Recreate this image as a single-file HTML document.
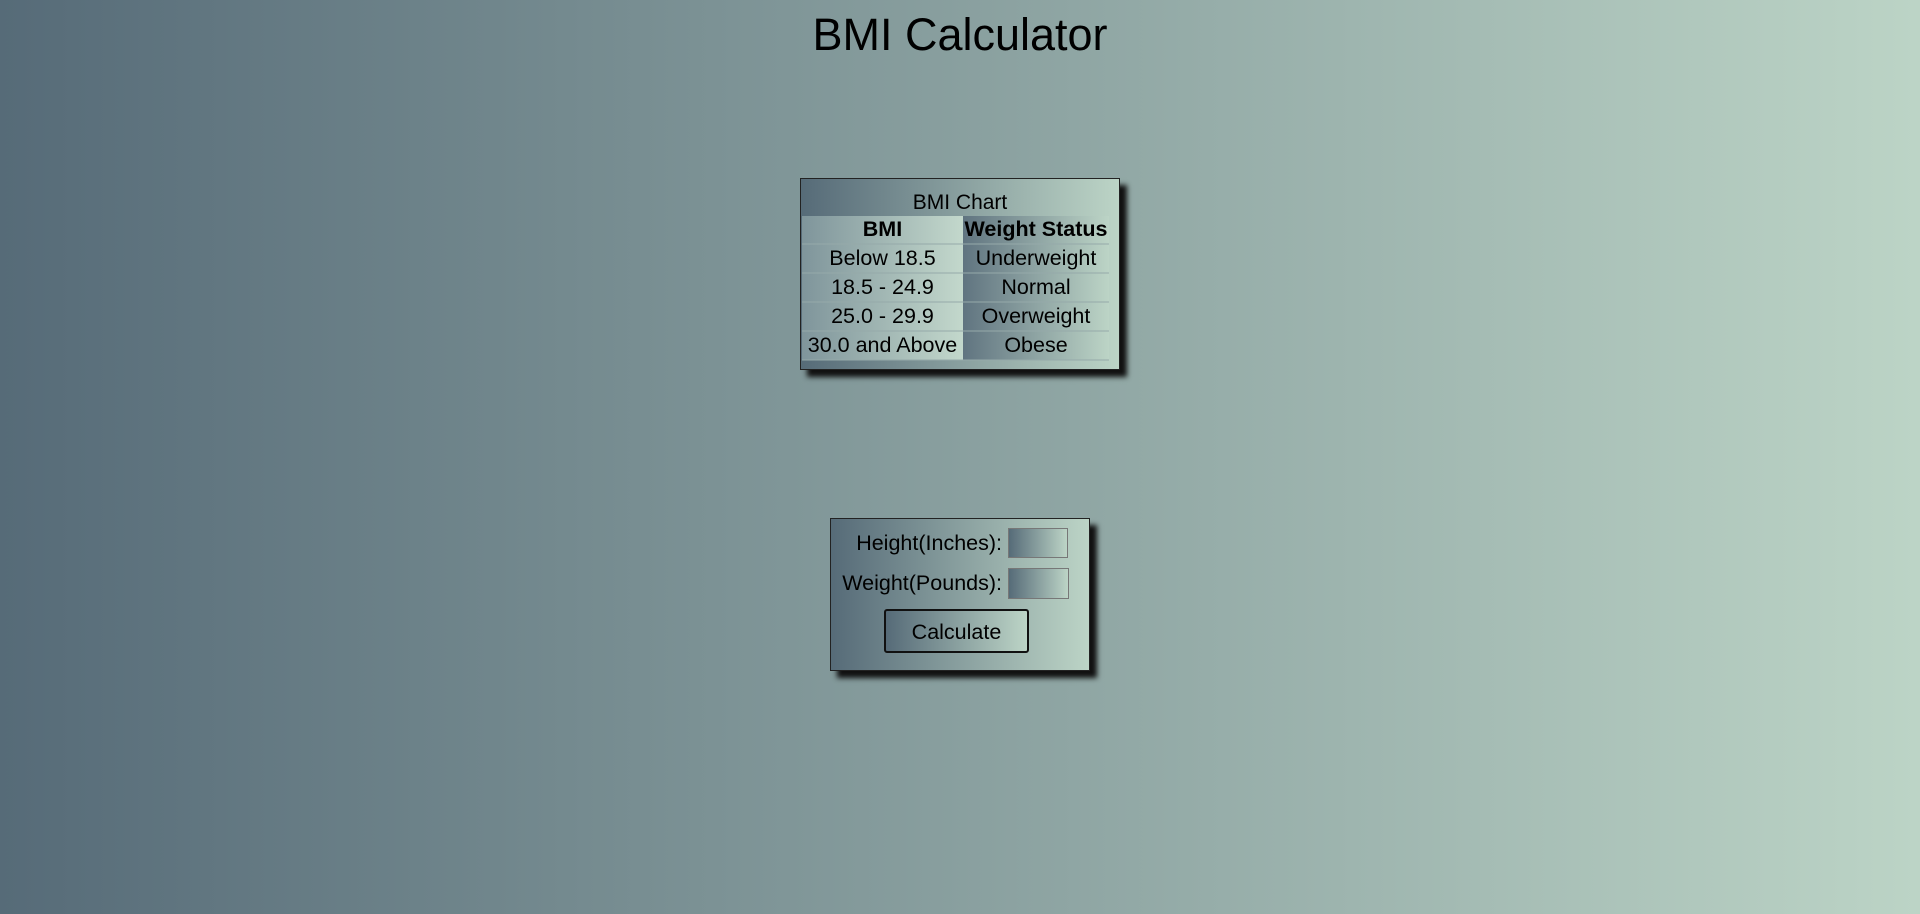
<!DOCTYPE html>
<html><head><meta charset="utf-8"><style>
html,body{margin:0;height:914px;width:1920px;overflow:hidden}
body{background:linear-gradient(to right,#566b78,#bcd4c6);font-family:"Liberation Sans",sans-serif;color:#000;position:relative}
h1{position:absolute;top:9px;left:0;width:100%;text-align:center;margin:0;font-weight:normal;font-size:45px}
.box{position:absolute;background:linear-gradient(to right,#566b78,#bcd4c6);border:1px solid #222;box-shadow:7px 7px 5px #111}
#chart{left:800px;top:178px;width:318px;height:190px}
.cap{text-align:center;font-size:21px;margin-top:12px;height:25px}
table{border-collapse:collapse;margin-left:1px;font-size:21.5px}
td,th{text-align:center;height:27px;padding:0;border-bottom:2px solid rgba(150,170,170,.5);background:linear-gradient(to right,#607480,#bcd4c6)}
th{font-weight:bold}
td.l,th.l{width:161px;background:linear-gradient(to right,#7f959b,#c3d8cc)}
td.r,th.r{width:146px}
#form{left:830px;top:518px;width:258px;height:151px;font-size:21.5px}
.row{position:absolute;right:20px;display:flex;align-items:center}
.row span{margin-right:6px}
.in{width:60px;height:30px;border:1px solid #777;background:linear-gradient(to right,#566b78,#bcd4c6);box-sizing:border-box}
.btn{position:absolute;left:53px;top:90px;width:145px;height:44px;border:2px solid #111;border-radius:3px;box-sizing:border-box;background:linear-gradient(to right,#566b78,#bcd4c6);text-align:center;line-height:42px;font-size:21.5px}
</style></head><body>
<h1>BMI Calculator</h1>
<div id="chart" class="box">
<div class="cap">BMI Chart</div>
<table>
<tr><th class="l">BMI</th><th class="r">Weight Status</th></tr>
<tr><td class="l">Below 18.5</td><td class="r">Underweight</td></tr>
<tr><td class="l">18.5 - 24.9</td><td class="r">Normal</td></tr>
<tr><td class="l">25.0 - 29.9</td><td class="r">Overweight</td></tr>
<tr><td class="l">30.0 and Above</td><td class="r">Obese</td></tr>
</table>
</div>
<div id="form" class="box">
<div class="row" style="top:9px;right:21px"><span>Height(Inches):</span><div class="in"></div></div>
<div class="row" style="top:49px;right:20px"><span>Weight(Pounds):</span><div class="in" style="width:61px;height:31px"></div></div>
<div class="btn">Calculate</div>
</div>
</body></html>
